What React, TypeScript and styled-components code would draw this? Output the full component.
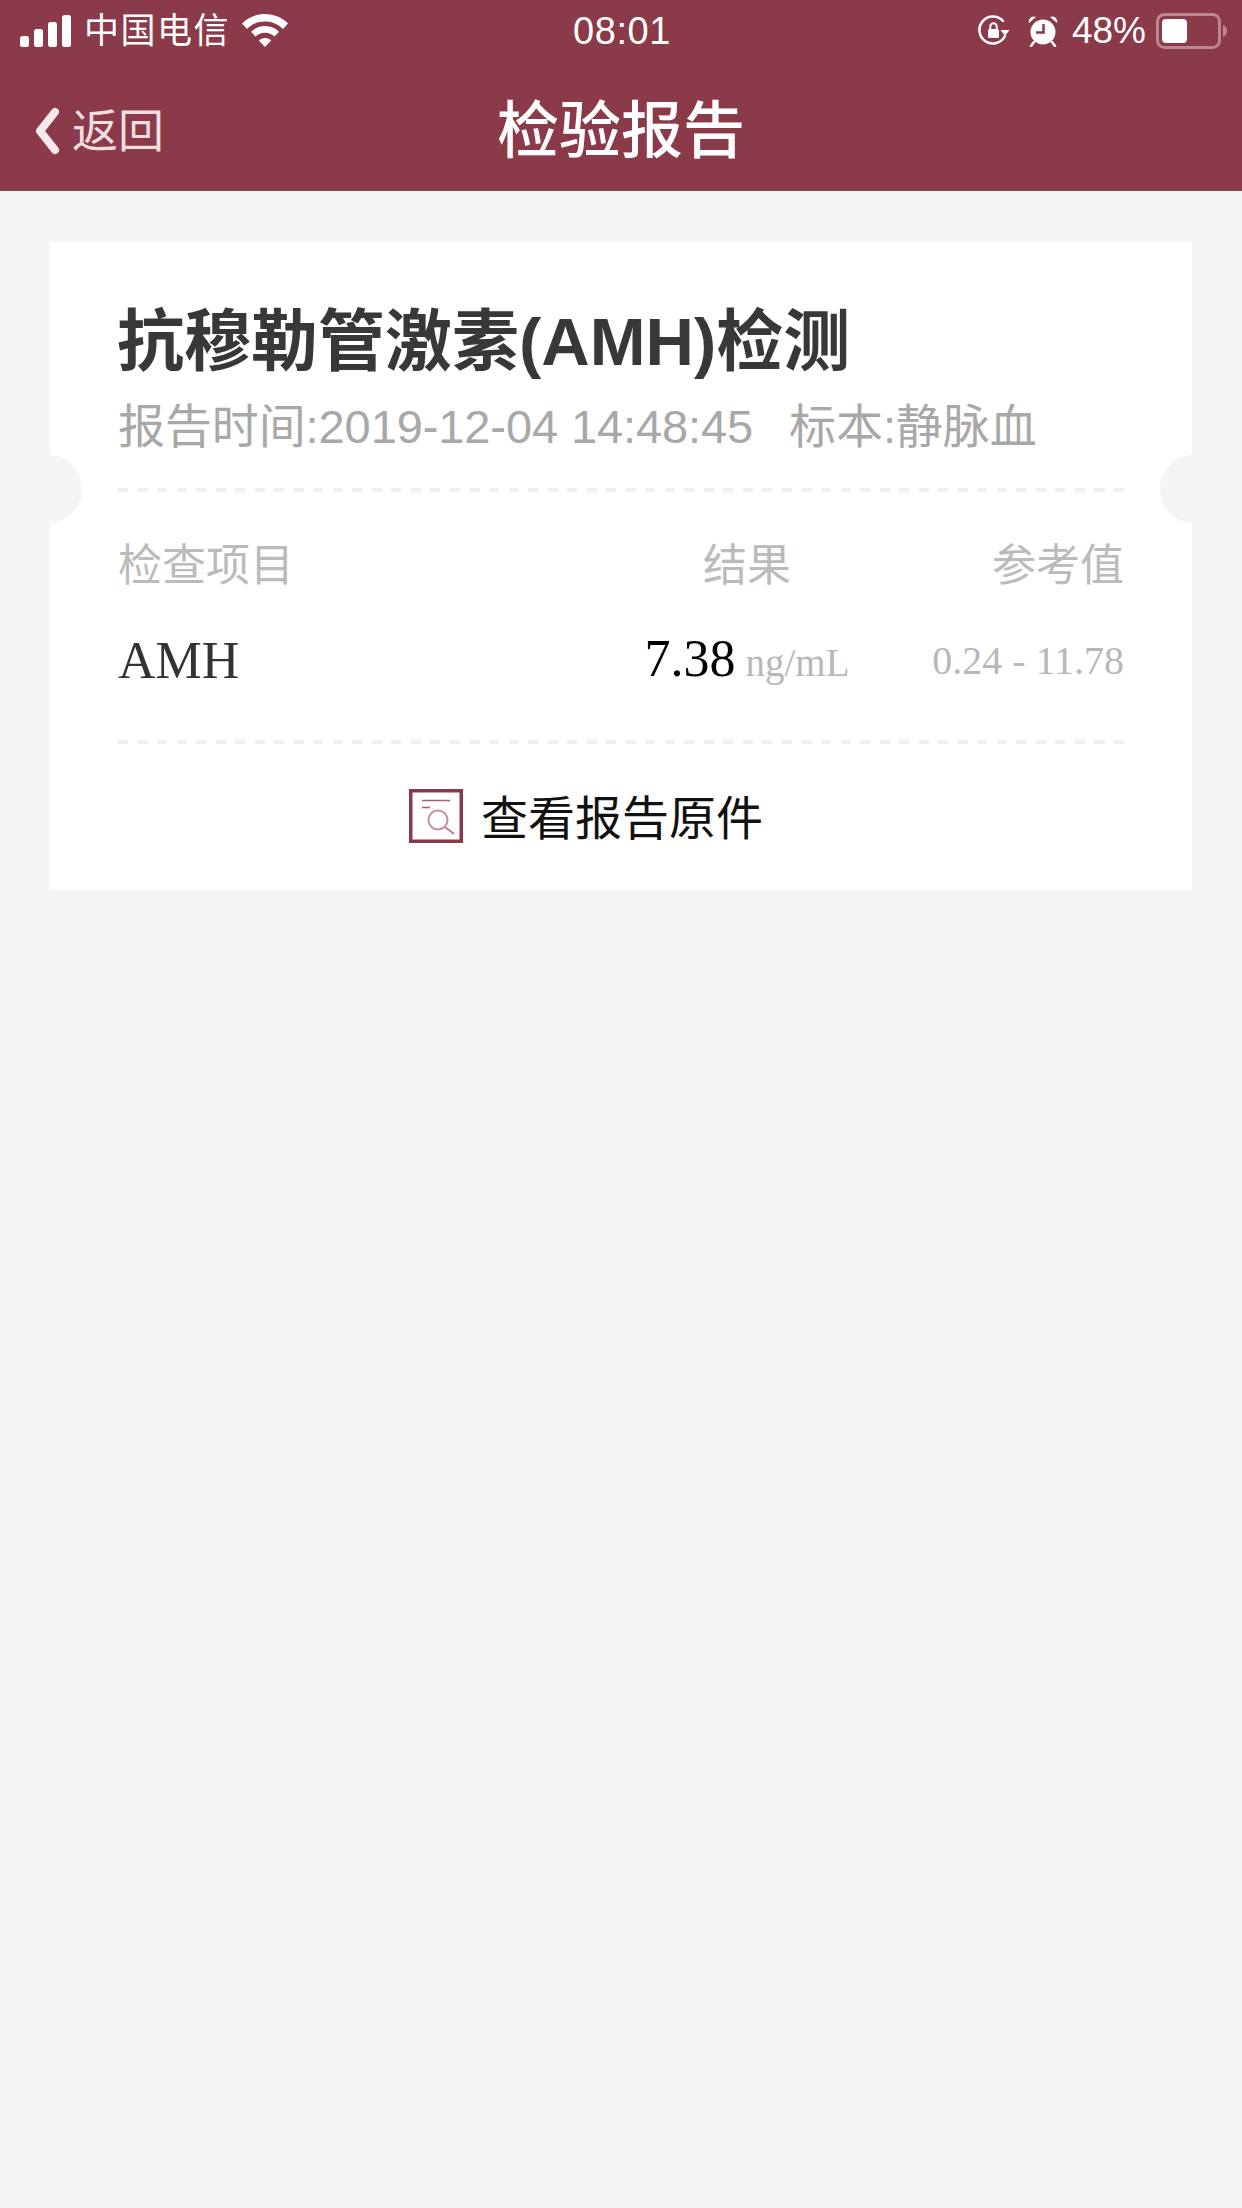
import React from "react";
import styled, { createGlobalStyle } from "styled-components";

const CJK = `"Liberation Sans", "Noto Sans CJK SC", sans-serif`;
const SERIF = `"Liberation Serif", "Noto Sans CJK SC", serif`;

const GlobalStyle = createGlobalStyle`
  html, body {
    margin: 0;
    padding: 0;
    background: #f5f5f5;
  }
`;

const Page = styled.div`
  width: 1242px;
  height: 2208px;
  background: #f5f5f5;
  overflow: hidden;
  font-family: ${CJK};
`;

const Header = styled.header`
  height: 191px;
  background: #8a3a48;
  color: #fff;
  display: flex;
  flex-direction: column;
`;

const StatusBar = styled.div`
  height: 62px;
  display: grid;
  grid-template-columns: 1fr auto 1fr;
  align-items: center;
  padding: 0 14px 0 20px;
`;

const StatusLeft = styled.div`
  display: flex;
  align-items: center;
  gap: 12px;
`;

const StatusRight = styled.div`
  display: flex;
  align-items: center;
  justify-content: flex-end;
  gap: 10px;
`;

const Carrier = styled.span`
  font-size: 35px;
  line-height: 40px;
  letter-spacing: 1.5px;
`;

const Clock = styled.span`
  font-size: 38px;
  line-height: 40px;
  margin-right: 4px;
  font-family: "Liberation Sans", sans-serif;
  letter-spacing: 0.6px;
`;

const Percent = styled.span`
  font-size: 37px;
  line-height: 40px;
  margin-left: 4px;
  font-family: "Liberation Sans", sans-serif;
`;

const NavBar = styled.div`
  height: 129px;
  display: grid;
  grid-template-columns: 1fr auto 1fr;
  align-items: center;
`;

const BackLink = styled.div`
  display: flex;
  align-items: center;
  gap: 12px;
  padding: 8px 0 0 34px;
  font-size: 46px;
  line-height: 50px;
  color: #f0dde0;
`;

const NavTitle = styled.h1`
  margin: 0;
  padding-bottom: 2px;
  font-size: 62px;
  line-height: 70px;
  font-weight: 500;
  font-family: "Noto Sans CJK SC", sans-serif;
`;

const Card = styled.section`
  position: relative;
  margin: 51px 50px 0;
  background: #fff;
  height: 648px;
  overflow: hidden;
  padding: 0 68px;
  display: flex;
  flex-direction: column;
`;

const Title = styled.h2`
  margin: 62px 0 0 -1px;
  font-size: 67px;
  line-height: 76px;
  font-weight: 700;
  color: #383838;
  white-space: nowrap;
`;

const Meta = styled.div`
  margin-top: 19px;
  display: flex;
  gap: 36px;
  font-size: 47px;
  line-height: 56px;
  letter-spacing: -0.1px;
  color: #a8a8a8;
  white-space: nowrap;
`;

const Notch = styled.span<{ $side: "left" | "right" }>`
  position: absolute;
  top: 213px;
  ${(p) => p.$side}: -32px;
  width: 64px;
  height: 68px;
  border-radius: 50%;
  background: #f5f5f5;
`;

const Divider = styled.div<{ $gap: number }>`
  height: 4px;
  flex: none;
  margin-top: ${(p) => p.$gap}px;
  background: repeating-linear-gradient(
    to right,
    #f0f0f0 0 10px,
    transparent 10px 19.53px
  );
`;

const TableGrid = styled.div`
  display: grid;
  grid-template-columns: 509px 240px 257px;
`;

const TableHead = styled(TableGrid)`
  margin-top: 48px;
  font-size: 44px;
  line-height: 52px;
  color: #bbbbbb;
`;

const Cell = styled.div<{ $align?: string }>`
  text-align: ${(p) => p.$align || "left"};
  white-space: nowrap;
`;

const TableRow = styled(TableGrid)`
  align-items: center;
  margin-top: 31px;
  font-family: ${SERIF};
  height: 72px;
  line-height: 72px;
`;

const Item = styled(Cell)`
  font-size: 52px;
  color: #333;
`;

const ValueCell = styled(Cell)`
  font-size: 52px;
  color: #000;
`;

const Unit = styled.span`
  font-size: 39px;
  color: #b8b8b8;
  margin-left: 10px;
`;

const Range = styled(Cell)`
  font-size: 40px;
  color: #b8b8b8;
`;

const OriginalLink = styled.div`
  flex: 1;
  display: flex;
  align-items: center;
  justify-content: center;
  gap: 18px;
  padding: 0 70px 2px 0;
  font-size: 47px;
  color: #111;
  font-family: "Noto Sans CJK SC", sans-serif;
`;

const LinkLabel = styled.span`
  margin-bottom: 4px;
`;

const SignalIcon = () => (
  <svg width="52" height="32" viewBox="0 0 52 32" fill="#fff">
    <rect x="0" y="21" width="9" height="11" rx="2.5" />
    <rect x="14" y="14" width="9" height="18" rx="2.5" />
    <rect x="28" y="7" width="9" height="25" rx="2.5" />
    <rect x="42" y="0" width="9" height="32" rx="2.5" />
  </svg>
);

const WifiIcon = () => (
  <svg width="46" height="34" viewBox="0 0 46 34" fill="#fff">
    <path d="M23 0C14 0 6 3.500 0 9.500L5 15C10 10 16 7.500 23 7.500S36 10 41 15L46 9.500C40 3.500 32 0 23 0Z" />
    <path d="M23 12C17.500 12 12.500 14.200 9 17.800L13.500 22.500C16 20 19.300 18.700 23 18.700S30 20 32.500 22.500L37 17.800C33.500 14.200 28.500 12 23 12Z" />
    <path d="M23 24C20.500 24 18.300 25 16.800 26.500L23 33L29.200 26.500C27.700 25 25.500 24 23 24Z" />
  </svg>
);

const RotationLockIcon = () => (
  <svg width="32" height="32" viewBox="0 0 32 32" fill="none">
    <path d="M27 21A13.500 13.500 0 1 1 25 6" stroke="#fff" strokeWidth="2.500" strokeLinecap="round" />
    <path d="M22.500 15h9l-4.500 6z" fill="#fff" />
    <rect x="10" y="14" width="11" height="9" rx="1.500" fill="#fff" />
    <path d="M12.300 14v-2.500a3.200 3.200 0 0 1 6.400 0V14" stroke="#fff" strokeWidth="2" />
  </svg>
);

const AlarmGraphic = styled.svg`
  margin-left: 8px;
`;

const AlarmIcon = () => (
  <AlarmGraphic width="30" height="32" viewBox="0 0 30 32">
    <circle cx="15" cy="17" r="12.500" fill="#fff" />
    <path d="M1 8a5 5 0 0 1 7-6zM29 8a5 5 0 0 0-7-6z" fill="#fff" />
    <path d="M6 27l-3 4M24 27l3 4" stroke="#fff" strokeWidth="2.500" strokeLinecap="round" />
    <path d="M15.500 9v8.500H8" stroke="#8a3a48" strokeWidth="2.500" fill="none" />
  </AlarmGraphic>
);

const BatteryIcon = () => (
  <svg width="72" height="36" viewBox="0 0 72 36">
    <rect x="1.500" y="1.500" width="62" height="33" rx="7" fill="none" stroke="#fff" strokeOpacity="0.4" strokeWidth="3" />
    <rect x="6" y="6" width="25" height="24" rx="4" fill="#fff" />
    <path d="M67 12c3 1 4 3.500 4 6s-1 5-4 6z" fill="#fff" fillOpacity="0.4" />
  </svg>
);

const BackChevron = () => (
  <svg width="26" height="48" viewBox="0 0 26 48" fill="none">
    <path d="M21 5L6 24L21 43" stroke="#f6e9eb" strokeWidth="8" strokeLinecap="round" strokeLinejoin="round" />
  </svg>
);

const ReportIcon = () => (
  <svg width="54" height="54" viewBox="0 0 54 54" fill="none">
    <rect x="1.750" y="1.750" width="50.500" height="50.500" stroke="#8a3a48" strokeWidth="3.500" />
    <path d="M13 11.500h28M13 18.500h8" stroke="#a85f6b" strokeWidth="1.500" />
    <circle cx="29" cy="31" r="9.500" stroke="#c4929b" strokeWidth="2" />
    <path d="M36 38l9 7" stroke="#b5808a" strokeWidth="2" />
  </svg>
);

export default function App() {
  return (
    <Page>
      <GlobalStyle />
      <Header>
        <StatusBar>
          <StatusLeft>
            <SignalIcon />
            <Carrier>中国电信</Carrier>
            <WifiIcon />
          </StatusLeft>
          <Clock>08:01</Clock>
          <StatusRight>
            <RotationLockIcon />
            <AlarmIcon />
            <Percent>48%</Percent>
            <BatteryIcon />
          </StatusRight>
        </StatusBar>
        <NavBar>
          <BackLink>
            <BackChevron />
            返回
          </BackLink>
          <NavTitle>检验报告</NavTitle>
        </NavBar>
      </Header>
      <Card>
        <Notch $side="left" />
        <Notch $side="right" />
        <Title>抗穆勒管激素(AMH)检测</Title>
        <Meta>
          <span>报告时间:2019-12-04 14:48:45</span>
          <span>标本:静脉血</span>
        </Meta>
        <Divider $gap={33} />
        <TableHead>
          <Cell>检查项目</Cell>
          <Cell $align="center">结果</Cell>
          <Cell $align="right">参考值</Cell>
        </TableHead>
        <TableRow>
          <Item>AMH</Item>
          <ValueCell $align="center">
            7.38
            <Unit>ng/mL</Unit>
          </ValueCell>
          <Range $align="right">0.24 - 11.78</Range>
        </TableRow>
        <Divider $gap={45} />
        <OriginalLink>
          <ReportIcon />
          <LinkLabel>查看报告原件</LinkLabel>
        </OriginalLink>
      </Card>
    </Page>
  );
}
